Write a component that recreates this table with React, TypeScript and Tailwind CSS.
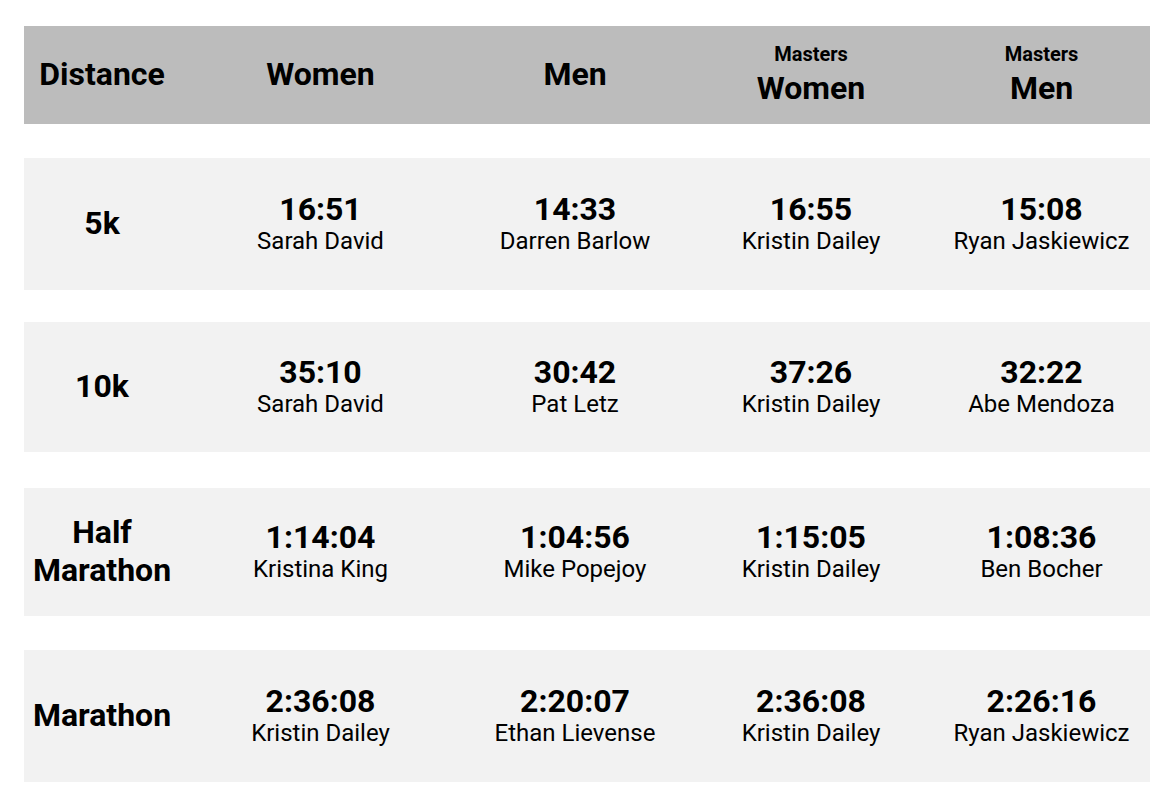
const rows = [
  {
    label: ["5k"],
    h: "h-[132px]",
    mt: "mt-[34px]",
    cells: [
      ["16:51", "Sarah David"],
      ["14:33", "Darren Barlow"],
      ["16:55", "Kristin Dailey"],
      ["15:08", "Ryan Jaskiewicz"],
    ],
  },
  {
    label: ["10k"],
    h: "h-[130px]",
    mt: "mt-[32px]",
    cells: [
      ["35:10", "Sarah David"],
      ["30:42", "Pat Letz"],
      ["37:26", "Kristin Dailey"],
      ["32:22", "Abe Mendoza"],
    ],
  },
  {
    label: ["Half", "Marathon"],
    h: "h-[128px]",
    mt: "mt-[36px]",
    cells: [
      ["1:14:04", "Kristina King"],
      ["1:04:56", "Mike Popejoy"],
      ["1:15:05", "Kristin Dailey"],
      ["1:08:36", "Ben Bocher"],
    ],
  },
  {
    label: ["Marathon"],
    h: "h-[132px]",
    mt: "mt-[34px]",
    cells: [
      ["2:36:08", "Kristin Dailey"],
      ["2:20:07", "Ethan Lievense"],
      ["2:36:08", "Kristin Dailey"],
      ["2:26:16", "Ryan Jaskiewicz"],
    ],
  },
];

const grid = "grid grid-cols-[156px_281px_228px_244px_217px]";

export default function App() {
  return (
    <div className="min-h-screen bg-white font-['Roboto',sans-serif] text-black">
      <div className="pt-[26px] pl-[24px] w-[1150px]">
        {/* Header */}
        <div className={`${grid} h-[98px] bg-[#bcbcbc] font-bold`}>
          <div className="flex items-center justify-center text-[32px] pb-[2px]">
            Distance
          </div>
          <div className="flex items-center justify-center text-[32px] pb-[2px]">
            Women
          </div>
          <div className="flex items-center justify-center text-[32px] pb-[2px]">
            Men
          </div>
          <div className="flex flex-col items-center justify-center">
            <span className="text-[20px] leading-[22px]">Masters</span>
            <span className="text-[32px] leading-[40px] pt-[3px]">Women</span>
          </div>
          <div className="flex flex-col items-center justify-center">
            <span className="text-[20px] leading-[22px]">Masters</span>
            <span className="text-[32px] leading-[40px] pt-[3px]">Men</span>
          </div>
        </div>

        {/* Rows */}
        {rows.map((row) => (
          <div
            key={row.label.join(" ")}
            className={`${grid} ${row.h} ${row.mt} bg-[#f2f2f2]`}
          >
            <div className="flex flex-col items-center justify-center text-[32px] font-bold leading-[38px] pb-[3px]">
              {row.label.map((l) => (
                <span key={l}>{l}</span>
              ))}
            </div>
            {row.cells.map(([time, name], i) => (
              <div
                key={i}
                className="flex flex-col items-center justify-center pb-[2px]"
              >
                <span className="text-[32px] font-bold leading-[36px]">
                  {time}
                </span>
                <span className="text-[24px] leading-[28px]">{name}</span>
              </div>
            ))}
          </div>
        ))}
      </div>
    </div>
  );
}
